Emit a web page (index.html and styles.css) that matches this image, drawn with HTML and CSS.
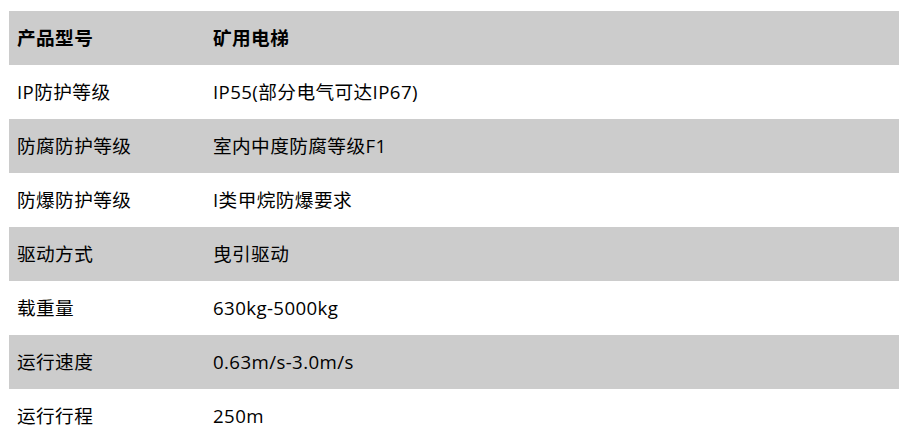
FILE: index.html
```html
<!DOCTYPE html>
<html lang="zh">
<head>
<meta charset="utf-8">
<link rel="stylesheet" href="styles.css">
</head>
<body>
<table class="spec">
<thead>
<tr><th class="k">产品型号</th><th>矿用电梯</th></tr>
</thead>
<tbody>
<tr><td class="k">IP防护等级</td><td>IP55(部分电气可达IP67)</td></tr>
<tr class="alt"><td class="k">防腐防护等级</td><td>室内中度防腐等级F1</td></tr>
<tr><td class="k">防爆防护等级</td><td>I类甲烷防爆要求</td></tr>
<tr class="alt"><td class="k">驱动方式</td><td>曳引驱动</td></tr>
<tr><td class="k">载重量</td><td>630kg-5000kg</td></tr>
<tr class="alt"><td class="k">运行速度</td><td>0.63m/s-3.0m/s</td></tr>
<tr><td class="k">运行行程</td><td>250m</td></tr>
</tbody>
</table>
</body>
</html>
```
FILE: styles.css
```css
html, body { margin: 0; padding: 0; background: #fff; }
body {
  padding: 11px 10px 0 9px;
  font-family: "Open Sans", "Noto Sans CJK SC", sans-serif;
  font-size: 18.67px;
  letter-spacing: 0.4px;
  color: #000;
}
.spec {
  width: 890px;
  border-collapse: collapse;
  table-layout: fixed;
}
.spec th, .spec td {
  height: 54px;
  padding: 0 8px;
  text-align: left;
  vertical-align: middle;
  line-height: 24px;
  box-sizing: border-box;
}
.spec th { font-weight: bold; }
.spec thead tr, .spec tr.alt { background: #cccccc; }
.spec .k { width: 196px; }
```
